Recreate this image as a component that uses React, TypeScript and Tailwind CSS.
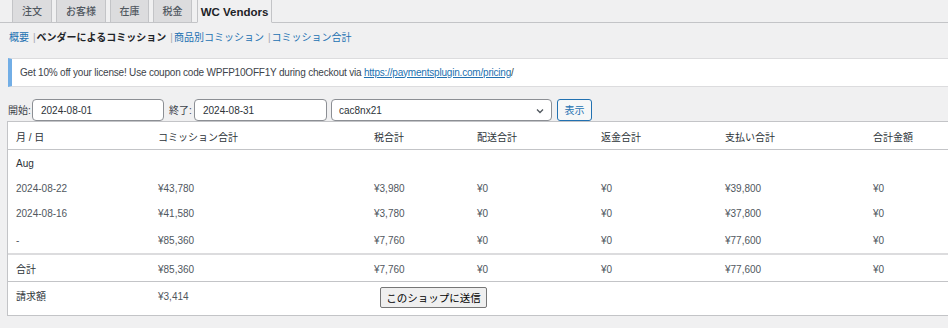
import React from 'react';

const cols = 'grid grid-cols-[142px_216px_103px_124px_124px_148px_200px]';

const rows = [
  { label: '2024-08-22', vals: ['¥43,780', '¥3,980', '¥0', '¥0', '¥39,800', '¥0'], h: 'h-[25px]' },
  { label: '2024-08-16', vals: ['¥41,580', '¥3,780', '¥0', '¥0', '¥37,800', '¥0'], h: 'h-[26px]' },
  { label: '-', vals: ['¥85,360', '¥7,760', '¥0', '¥0', '¥77,600', '¥0'], h: 'h-[28px]' },
];

const tabs = [
  { name: '注文', w: 'w-[40px]' },
  { name: 'お客様', w: 'w-[50px]' },
  { name: '在庫', w: 'w-[39px]' },
  { name: '税金', w: 'w-[39px]' },
];

const App: React.FC = () => {
  return (
    <div className="w-[948px] h-[328px] overflow-hidden bg-[#f0f0f1] text-[10px] leading-[14px] text-[#3c434a] font-['Liberation_Sans','Noto_Sans_CJK_JP',sans-serif]">
      <div className="w-[1000px] pl-[7px]">
        {/* タブ */}
        <div className="flex items-end h-[23px] border-b border-[#c3c4c7] -ml-[7px] pl-[12px]">
          {tabs.map((t) => (
            <div
              key={t.name}
              className={`${t.w} h-[24px] -mb-px mr-[4px] pt-[2px] flex items-center justify-center bg-[#dcdcde] border border-[#c3c4c7] font-medium text-[#50575e]`}
            >
              {t.name}
            </div>
          ))}
          <div className="w-[75px] h-[24px] -mb-px ml-px pt-[2px] flex items-center justify-center bg-[#f0f0f1] border border-[#c3c4c7] border-b-[#f0f0f1] text-[11.5px] font-bold text-[#1d2327]">
            WC Vendors
          </div>
        </div>

        {/* サブナビ */}
        <div className="mt-[7px] h-[16px] flex items-center pl-[2px] text-[#50575e]">
          <a className="text-[#2271b1]">概要</a>
          <span className="ml-[4px] mr-px text-[#a7aaad]">|</span>
          <span className="font-semibold text-[#1d2327]">ベンダーによるコミッション</span>
          <span className="ml-[4px] mr-px text-[#a7aaad]">|</span>
          <a className="text-[#2271b1]">商品別コミッション</a>
          <span className="ml-[4px] mr-px text-[#a7aaad]">|</span>
          <a className="text-[#2271b1]">コミッション合計</a>
        </div>

        {/* お知らせ */}
        <div className="mt-[12px] ml-px h-[29px] flex items-center bg-white border border-[#dcdcde] border-l-4 border-l-[#72aee6] pl-[8px] text-[#3c434a] tracking-[-0.2px]">
          <span>
            Get 10% off your license! Use coupon code WPFP10OFF1Y during checkout via{' '}
            <a className="text-[#2271b1] underline">https://paymentsplugin.com/pricing</a>/
          </span>
        </div>

        {/* フィルター */}
        <div className="mt-[12px] h-[22px] flex items-center text-[#3c434a]">
          <span className="ml-px w-[24px] pt-[2px]">開始:</span>
          <div className="w-[132px] h-[22px] flex items-center pl-[8px] pt-[2px] bg-white border border-[#8c8f94] rounded-[4px] text-[#2c3338]">
            2024-08-01
          </div>
          <span className="ml-[5px] w-[25px] pt-[2px]">終了:</span>
          <div className="w-[133px] h-[22px] flex items-center pl-[8px] pt-[2px] bg-white border border-[#8c8f94] rounded-[4px] text-[#2c3338]">
            2024-08-31
          </div>
          <div className="ml-[4px] w-[221px] h-[22px] flex items-center justify-between pl-[7px] pr-[6px] pt-[2px] bg-white border border-[#8c8f94] rounded-[4px] text-[#2c3338]">
            <span>cac8nx21</span>
            <svg width="10" height="10" viewBox="0 0 10 10" fill="none">
              <path d="M2 3.5 L5 6.5 L8 3.5" stroke="#50575e" strokeWidth="1.3" />
            </svg>
          </div>
          <div className="ml-[5px] w-[35px] h-[22px] pt-[2px] flex items-center justify-center bg-[#f6f7f7] border border-[#2271b1] rounded-[3px] text-[#2271b1]">
            表示
          </div>
        </div>

        {/* テーブル */}
        <div className="bg-white border border-[#c3c4c7] text-[#50575e]">
          <div className={`${cols} h-[28px] pt-[4px] items-center border-b border-[#c3c4c7] text-[#2c3338]`}>
            <div className="pl-2">月 / 日</div>
            <div className="pl-2">コミッション合計</div>
            <div className="pl-2">税合計</div>
            <div className="pl-2">配送合計</div>
            <div className="pl-2">返金合計</div>
            <div className="pl-2">支払い合計</div>
            <div className="pl-2">合計金額</div>
          </div>
          <div className={`${cols} h-[24px] pt-[4px] items-center`}>
            <div className="pl-2 text-[#2c3338]">Aug</div>
          </div>
          {rows.map((r) => (
            <div key={r.label + r.h} className={`${cols} ${r.h} pt-[4px] items-center`}>
              <div className="pl-2">{r.label}</div>
              {r.vals.map((v, i) => (
                <div key={i} className="pl-2">{v}</div>
              ))}
            </div>
          ))}
          <div className={`${cols} h-[29px] pt-[4px] items-center border-t-2 border-[#dcdcde] border-b border-b-[#c3c4c7]`}>
            <div className="pl-2 text-[#2c3338]">合計</div>
            {['¥85,360', '¥7,760', '¥0', '¥0', '¥77,600', '¥0'].map((v, i) => (
              <div key={i} className="pl-2">{v}</div>
            ))}
          </div>
          <div className={`${cols} h-[33px] items-start`}>
            <div className="pl-2 pt-[8px] text-[#2c3338]">請求額</div>
            <div className="pl-2 pt-[8px]">¥3,414</div>
            <div className="pl-2 col-span-2">
              <button className="mt-[5px] ml-[6px] h-[21px] w-[107px] pt-px bg-[#efefef] border border-[#767676] rounded-[2px] text-[10.5px] text-[#000] whitespace-nowrap">
                このショップに送信
              </button>
            </div>
          </div>
        </div>
      </div>
    </div>
  );
};

export default App;
